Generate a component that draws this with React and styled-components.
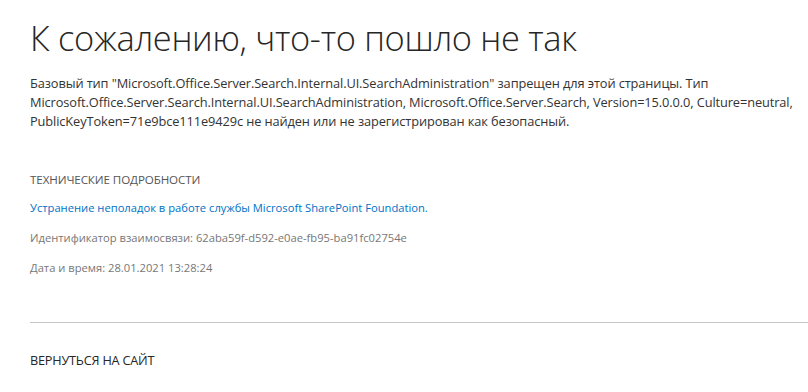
import styled, { createGlobalStyle } from "styled-components";

const GlobalStyle = createGlobalStyle`
  html, body {
    margin: 0;
    padding: 0;
    background: #fff;
  }
  body {
    font-family: "Open Sans", "Noto Sans", sans-serif;
    color: #444;
  }
`;

const Page = styled.div`
  padding: 14px 0 0 30px;
  width: 778px;
`;

const Title = styled.h1`
  margin: 0;
  font-size: 34.4px;
  font-weight: 300;
  line-height: 48px;
  color: #262626;
  letter-spacing: -0.3px;
`;

const Message = styled.p`
  margin: 12px 0 0;
  font-size: 12.8px;
  line-height: 19px;
  color: #333;
  letter-spacing: -0.1px;
  white-space: nowrap;
`;

const Details = styled.div`
  margin-top: 39px;
  display: flex;
  flex-direction: column;
  gap: 11px;
`;

const Caption = styled.div`
  margin-bottom: -2px;
  font-size: 11.6px;
  line-height: 19px;
  text-transform: uppercase;
  color: #555;
  letter-spacing: -0.1px;
`;

const DetailLine = styled.div`
  font-size: 11.2px;
  line-height: 19px;
  color: ${(p) => (p.$link ? "#0072c6" : "#777")};
  a {
    color: inherit;
    text-decoration: none;
  }
`;

const Divider = styled.hr`
  margin: 45px 0 0;
  border: none;
  border-top: 1px solid #c6c6c6;
`;

const BackLink = styled.a`
  display: block;
  margin-top: 28px;
  font-size: 12.7px;
  line-height: 19px;
  color: #262626;
  text-decoration: none;
  text-transform: uppercase;
  letter-spacing: -0.2px;
`;

export default function App() {
  return (
    <Page>
      <GlobalStyle />
      <Title>К сожалению, что-то пошло не так</Title>
      <Message>
        Базовый тип "Microsoft.Office.Server.Search.Internal.UI.SearchAdministration" запрещен для этой страницы. Тип
        <br />
        Microsoft.Office.Server.Search.Internal.UI.SearchAdministration, Microsoft.Office.Server.Search, Version=15.0.0.0, Culture=neutral,
        <br />
        PublicKeyToken=71e9bce111e9429c не найден или не зарегистрирован как безопасный.
      </Message>
      <Details>
        <Caption>Технические подробности</Caption>
        <DetailLine $link>
          <a href="#">Устранение неполадок в работе службы Microsoft SharePoint Foundation.</a>
        </DetailLine>
        <DetailLine>Идентификатор взаимосвязи: 62aba59f-d592-e0ae-fb95-ba91fc02754e</DetailLine>
        <DetailLine>Дата и время: 28.01.2021 13:28:24</DetailLine>
      </Details>
      <Divider />
      <BackLink href="#">Вернуться на сайт</BackLink>
    </Page>
  );
}
